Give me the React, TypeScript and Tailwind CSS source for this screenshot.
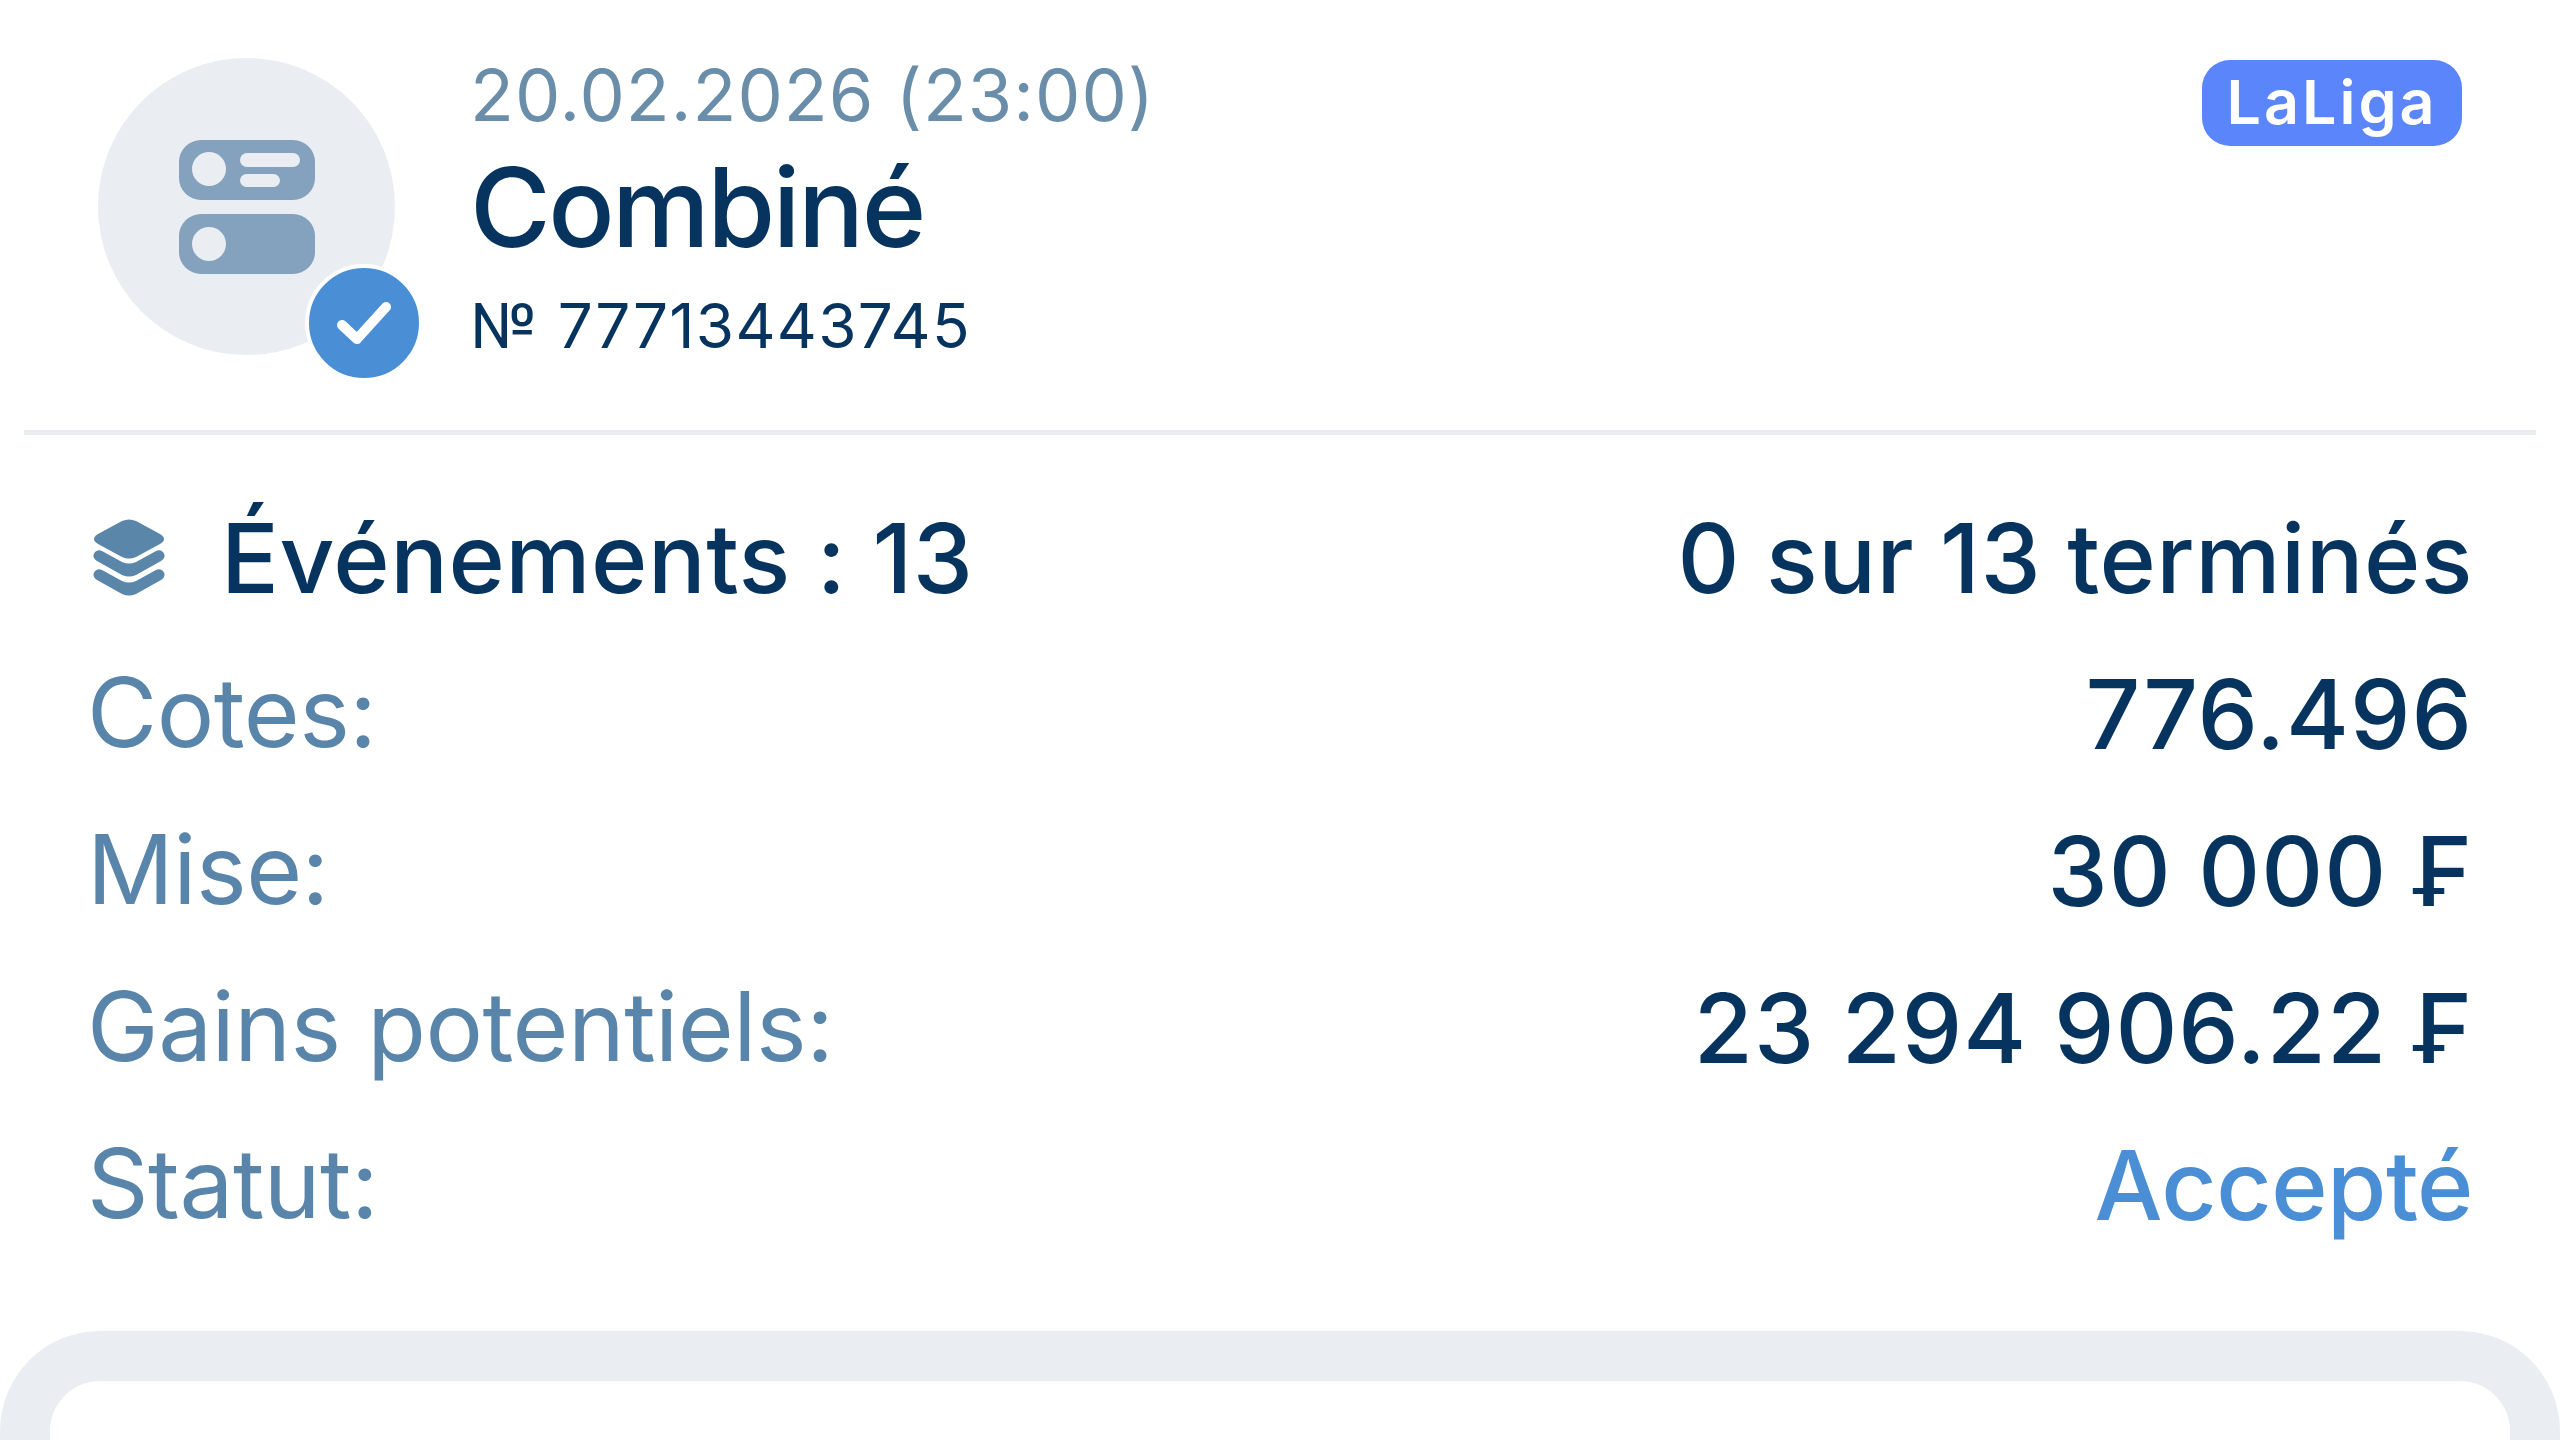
const Row = ({ label, value, valueClass = "text-[#06345f] tracking-[1px]" }: { label: string; value: string; valueClass?: string }) => (
  <div className="flex items-center justify-between h-[157px]">
    <span className="pb-[3px] text-[#5985aa]">{label}</span>
    <span className={`font-medium ${valueClass}`}>{value}</span>
  </div>
);

const TicketIcon = () => (
  <svg width="136" height="134" viewBox="0 0 136 134">
    <rect x="0" y="0" width="136" height="60" rx="22" fill="#84a2bd" />
    <rect x="0" y="74" width="136" height="60" rx="22" fill="#84a2bd" />
    <circle cx="30" cy="29" r="17" fill="#eaedf2" />
    <circle cx="30" cy="104" r="17" fill="#eaedf2" />
    <rect x="61" y="13" width="60" height="14" rx="7" fill="#eaedf2" />
    <rect x="61" y="34" width="40" height="13" rx="6.5" fill="#eaedf2" />
  </svg>
);

const LayersIcon = () => (
  <svg width="74" height="78" viewBox="0 0 74 78">
    <path d="M30 2 Q37 -1 44 2 L68 15 Q76 20 68 25 L44 38 Q37 41 30 38 L6 25 Q-2 20 6 15 Z" fill="#5a86aa" />
    <path d="M3 33 Q6 30 10 32 L30 43 Q37 46 44 43 L64 32 Q68 30 71 33 Q75 38 69 42 L44 56 Q37 59 30 56 L5 42 Q-1 38 3 33 Z" fill="#5a86aa" />
    <path d="M3 52 Q6 49 10 51 L30 62 Q37 65 44 62 L64 51 Q68 49 71 52 Q75 57 69 61 L44 75 Q37 78 30 75 L5 61 Q-1 57 3 52 Z" fill="#5a86aa" />
  </svg>
);

export default function App() {
  return (
    <div className="h-[1440px] w-[2560px] overflow-hidden bg-white font-['Inter',sans-serif]">
      {/* header */}
      <div className="mx-[24px] h-[435px] border-b-[5px] border-[#e9edf2] pl-[74px] pr-[74px] pt-[58px]">
        <div className="flex items-start">
          <div className="relative flex h-[297px] w-[297px] shrink-0 items-center justify-center rounded-full bg-[#eaedf2]">
            <TicketIcon />
            <div className="absolute left-[207px] top-[206px] flex h-[118px] w-[118px] items-center justify-center rounded-full border-[4px] border-white bg-[#4a8ed6]">
              <svg width="54" height="44" viewBox="0 0 54 44">
                <path d="M5 24 L20 38 L49 6" fill="none" stroke="white" strokeWidth="10" strokeLinecap="round" strokeLinejoin="round" />
              </svg>
            </div>
          </div>
          <div className="ml-[75px] flex flex-col">
            <div className="mt-[-1px] h-[76px] text-[72px] leading-[76px] tracking-[1px] text-[#6a8ea9]">20.02.2026 (23:00)</div>
            <div className="mt-[14px] h-[120px] text-[110px] font-medium leading-[120px] tracking-[-2.5px] text-[#06345f]">Combiné</div>
            <div className="mt-[24px] text-[62px] leading-[70px] tracking-[1.3px] text-[#06345f]">№ 77713443745</div>
          </div>
          <div className="ml-auto mt-[2px] flex h-[86px] w-[260px] items-center justify-center rounded-[28px] bg-[#5b85fb] text-[61px] font-semibold tracking-[3px] text-white">
            LaLiga
          </div>
        </div>
      </div>

      {/* summary rows */}
      <div className="px-[87px] pt-[43px] text-[96px] tracking-[-0.5px]">
        <div className="flex h-[157px] items-center justify-between pt-[3px] font-medium tracking-[0.5px] text-[#06345f]">
          <div className="flex items-center gap-[55px]">
            <div className="ml-[5px]">
              <LayersIcon />
            </div>
            <span>Événements : 13</span>
          </div>
          <span>0 sur 13 terminés</span>
        </div>
        <Row label="Cotes:" value="776.496" />
        <Row label="Mise:" value="30 000 ₣" />
        <Row label="Gains potentiels:" value="23 294 906.22 ₣" />
        <Row label="Statut:" value="Accepté" valueClass="text-[#4a8ed6]" />
      </div>

      {/* next card, cut off by the screen */}
      <div className="mt-[68px] h-[300px] rounded-t-[100px] border-x-[50px] border-t-[50px] border-[#eaedf2] bg-white" />
    </div>
  );
}
